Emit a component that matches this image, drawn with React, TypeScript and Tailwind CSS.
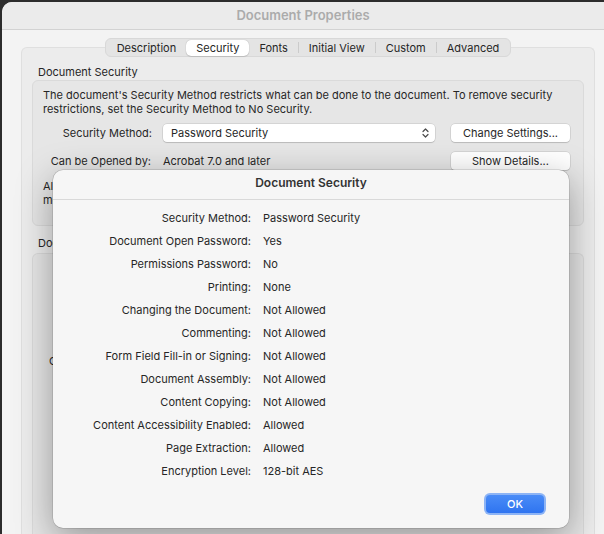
import React from 'react';

const font = { fontFamily: 'Inter, "Noto Sans", sans-serif' };

const TABS = ['Description', 'Security', 'Fonts', 'Initial View', 'Custom', 'Advanced'];

const DETAILS: [string, string][] = [
  ['Security Method:', 'Password Security'],
  ['Document Open Password:', 'Yes'],
  ['Permissions Password:', 'No'],
  ['Printing:', 'None'],
  ['Changing the Document:', 'Not Allowed'],
  ['Commenting:', 'Not Allowed'],
  ['Form Field Fill-in or Signing:', 'Not Allowed'],
  ['Document Assembly:', 'Not Allowed'],
  ['Content Copying:', 'Not Allowed'],
  ['Content Accessibility Enabled:', 'Allowed'],
  ['Page Extraction:', 'Allowed'],
  ['Encryption Level:', '128-bit AES'],
];

function Tabs() {
  return (
    <div className="relative z-10 flex justify-center">
      <div className="flex h-[19px] items-center rounded-[6px] border border-[#d8d8d8] bg-[#e4e4e4] px-[1px]">
        {TABS.map((t, i) => {
          const active = t === 'Security';
          const nextActive = TABS[i + 1] === 'Security';
          const last = i === TABS.length - 1;
          return (
            <React.Fragment key={t}>
              <div
                className={
                  active
                    ? 'flex h-[16px] items-center rounded-[5px] bg-white px-[10px] text-[11px] text-[#262626] shadow-[0_0_1px_rgba(0,0,0,0.3),0_1px_1px_rgba(0,0,0,0.1)]'
                    : 'flex h-[16px] items-center px-[10px] text-[11px] text-[#262626]'
                }
              >
                {t}
              </div>
              {!active && !nextActive && !last && <div className="h-[11px] w-px bg-[#cbcbcb]" />}
            </React.Fragment>
          );
        })}
      </div>
    </div>
  );
}

function Button({ children }: { children: React.ReactNode }) {
  return (
    <div className="flex h-[18px] w-[119px] items-center justify-center rounded-[4px] bg-white text-[11px] text-[#262626] shadow-[0_0_0_0.5px_rgba(0,0,0,0.15),0_1px_1px_rgba(0,0,0,0.12)]">
      {children}
    </div>
  );
}

function SecurityDialog() {
  return (
    <div className="absolute left-[53px] top-[170px] flex h-[358px] w-[516px] flex-col rounded-[10px] bg-[#f6f6f6] shadow-[0_0_0_0.5px_rgba(0,0,0,0.2),0_10px_36px_rgba(0,0,0,0.35)]">
      <div className="flex h-[30px] shrink-0 items-center justify-center border-b border-[#d9d9d9] pb-[4px] text-[12px] font-semibold text-[#333333]">
        Document Security
      </div>
      <div className="grid grid-cols-[198px_1fr] gap-x-[12px] pt-[7px]">
        {DETAILS.map(([k, v]) => (
          <React.Fragment key={k}>
            <div className="flex h-[23px] items-center justify-end text-[11px] text-[#262626]">{k}</div>
            <div className="flex h-[23px] items-center text-[11px] text-[#262626]">{v}</div>
          </React.Fragment>
        ))}
      </div>
      <div className="mt-auto flex justify-end pb-[13px] pr-[23px]">
        <div className="flex h-[22px] w-[62px] items-center justify-center rounded-[6px] bg-[#8db4f5] p-[2px]">
          <div className="flex h-full w-full items-center justify-center rounded-[4px] bg-gradient-to-b from-[#4a8cf7] to-[#2f74f0] text-[11px] font-medium text-white">
            OK
          </div>
        </div>
      </div>
    </div>
  );
}

export default function App() {
  return (
    <div className="relative h-[534px] w-[604px] overflow-hidden bg-[#2c2c2c] pl-[2px] pt-[2px]" style={font}>
      <div className="flex h-[532px] flex-col rounded-tl-[10px] bg-[#f3f3f3]">
        <div className="flex h-[28px] shrink-0 items-center justify-center rounded-tl-[10px] border-b border-[#d2d2d2] bg-[#ebebeb] text-[13px] font-semibold text-[#ababab]">
          Document Properties
        </div>
        <div className="flex flex-1 flex-col pl-[19px] pr-[9px] pt-[8px] text-[11px] leading-[14px] text-[#262626]">
          <Tabs />
          <div className="-mt-[10px] flex flex-1 flex-col rounded-t-[6px] border border-b-0 border-[#dfdfdf] bg-[#ececec] px-[10px] pt-[17px]">
            <div className="pl-[6px]">Document Security</div>
            <div className="mt-[1px] h-[146px] rounded-[6px] border border-[#dadada] bg-[#e6e6e6] px-[10px] pt-[7px]">
              <p>
                The document's Security Method restricts what can be done to the document. To remove security
                <br />
                restrictions, set the Security Method to No Security.
              </p>
              <div className="mt-[8px] flex items-center">
                <div className="w-[109px] text-right">Security Method:</div>
                <div className="ml-[11px] flex h-[18px] w-[272px] items-center justify-between rounded-[4px] bg-white pl-[8px] pr-[6px] shadow-[0_0_0_0.5px_rgba(0,0,0,0.15),0_1px_1px_rgba(0,0,0,0.12)]">
                  <span>Password Security</span>
                  <svg width="7" height="10" viewBox="0 0 7 10" fill="none" stroke="#4a4a4a" strokeWidth="1.2" strokeLinecap="round" strokeLinejoin="round">
                    <path d="M1 3.5 3.5 1 6 3.5" />
                    <path d="M1 6.5 3.5 9 6 6.5" />
                  </svg>
                </div>
                <div className="ml-[16px]">
                  <Button>Change Settings...</Button>
                </div>
              </div>
              <div className="mt-[10px] flex items-center">
                <div className="w-[108px] text-right">Can be Opened by:</div>
                <div className="ml-[12px] w-[288px]">Acrobat 7.0 and later</div>
                <Button>Show Details...</Button>
              </div>
              <p className="mt-[9px]">
                All contents of the document are encrypted and search engines cannot access the document's
                <br />
                metadata.
              </p>
            </div>
            <div className="mt-[10px] pl-[6px]">Document Restrictions Summary</div>
            <div className="mt-[3px] flex-1 rounded-t-[6px] border border-b-0 border-[#dadada] bg-[#e6e6e6] pl-[16px] pt-[100px]">
              <div>Content Copying for Accessibility:</div>
            </div>
          </div>
        </div>
      </div>
      <SecurityDialog />
    </div>
  );
}
